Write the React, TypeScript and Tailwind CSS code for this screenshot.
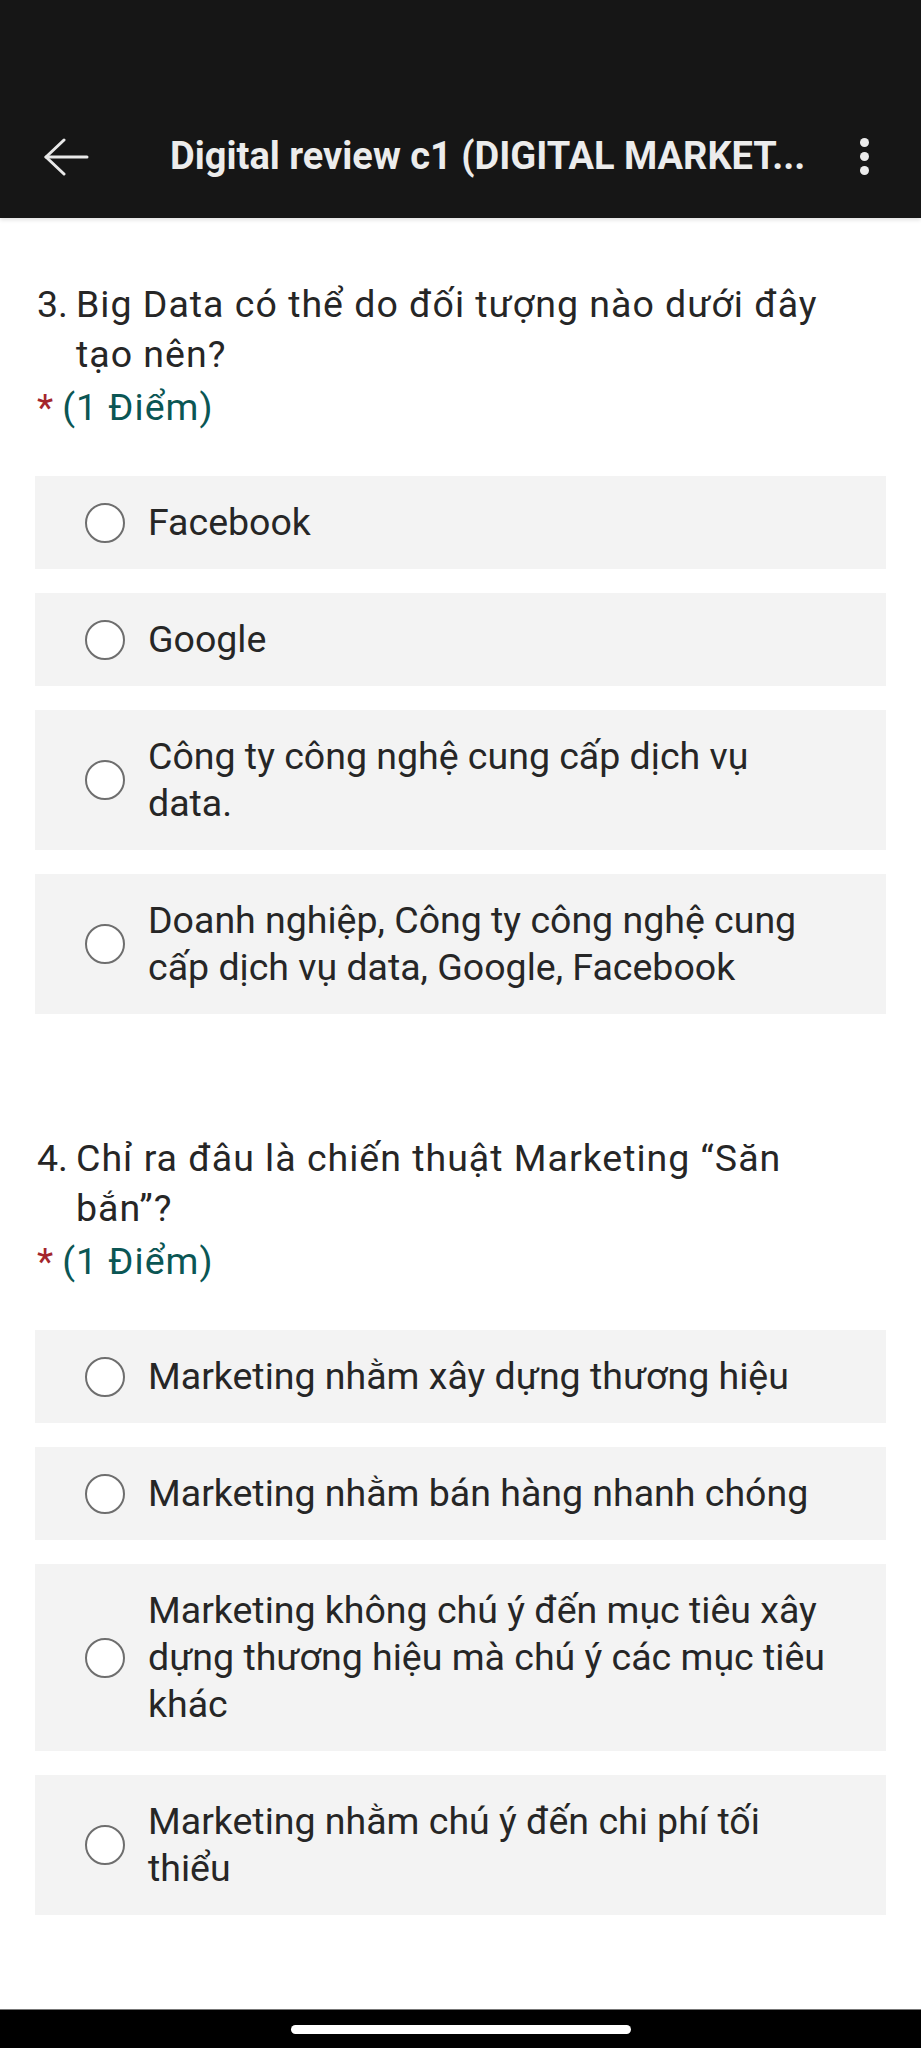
import React from 'react';

type Question = {
  num: string;
  text: string;
  options: string[];
  first?: boolean;
};

const questions: Question[] = [
  {
    num: '3.',
    text: 'Big Data có thể do đối tượng nào dưới đây tạo nên?',
    options: [
      'Facebook',
      'Google',
      'Công ty công nghệ cung cấp dịch vụ data.',
      'Doanh nghiệp, Công ty công nghệ cung cấp dịch vụ data, Google, Facebook',
    ],
    first: true,
  },
  {
    num: '4.',
    text: 'Chỉ ra đâu là chiến thuật Marketing “Săn bắn”?',
    options: [
      'Marketing nhằm xây dựng thương hiệu',
      'Marketing nhằm bán hàng nhanh chóng',
      'Marketing không chú ý đến mục tiêu xây dựng thương hiệu mà chú ý các mục tiêu khác',
      'Marketing nhằm chú ý đến chi phí tối thiểu',
    ],
  },
];

const Header: React.FC = () => (
  <header className="h-[218px] bg-[#161616] flex items-end pb-[30px] shadow-[0_2px_4px_rgba(0,0,0,0.12)] relative z-10">
    <div className="h-[64px] w-full flex items-center">
      <button className="ml-[43px] w-[46px] h-[40px] mt-[4px] text-[#e8e8e8]">
        <svg width="46" height="40" viewBox="0 0 46 40" fill="none" stroke="currentColor" strokeWidth="3" strokeLinecap="round" strokeLinejoin="round">
          <path d="M3 19h41" />
          <path d="M21 2L3 19l18 17" />
        </svg>
      </button>
      <h1 className="ml-[81px] flex-1 text-[38px] leading-[64px] font-bold text-[#ececec] whitespace-nowrap overflow-hidden">
        Digital review c1 (DIGITAL MARKET...
      </h1>
      <button className="ml-[20px] mr-[52px] flex flex-col gap-[5px] items-center">
        <span className="w-[9px] h-[9px] rounded-full bg-[#ececec]" />
        <span className="w-[9px] h-[9px] rounded-full bg-[#ececec]" />
        <span className="w-[9px] h-[9px] rounded-full bg-[#ececec]" />
      </button>
    </div>
  </header>
);

const Option: React.FC<{ label: string }> = ({ label }) => (
  <label className="flex items-center bg-[#f3f3f3] pl-[50px] pr-[50px] py-[23px]">
    <span className="shrink-0 w-[40px] h-[40px] rounded-full border-2 border-[#6e6e6e] bg-white" />
    <span className="ml-[23px] text-[37.5px] leading-[47px] text-[#262626]">{label}</span>
  </label>
);

const QuestionBlock: React.FC<{ q: Question }> = ({ q }) => (
  <section className={q.first ? 'mt-[61px]' : 'mt-[119px]'}>
    <div className="flex pl-[2px] pr-[40px] text-[37.5px] leading-[50px] tracking-[1px] text-[#262626]">
      <span className="shrink-0 w-[39px] tracking-normal">{q.num}</span>
      <span>{q.text}</span>
    </div>
    <div className="mt-[3px] pl-[2px] text-[37.5px] leading-[50px] tracking-[1px]">
      <span className="text-[#a4262c] mr-[8px]">*</span>
      <span className="text-[#0b5654]">(1 Điểm)</span>
    </div>
    <div className="mt-[44px] flex flex-col gap-[24px]">
      {q.options.map((o) => (
        <Option key={o} label={o} />
      ))}
    </div>
  </section>
);

export default function App() {
  return (
    <div className="w-[921px] h-[2048px] bg-white flex flex-col font-['Roboto',sans-serif] overflow-hidden">
      <Header />
      <main className="flex-1 px-[35px]">
        {questions.map((q) => (
          <QuestionBlock key={q.num} q={q} />
        ))}
      </main>
      <div className="h-[39px] bg-black flex items-center justify-center border-t border-[#777]">
        <span className="w-[340px] h-[9px] rounded-full bg-white" />
      </div>
    </div>
  );
}
